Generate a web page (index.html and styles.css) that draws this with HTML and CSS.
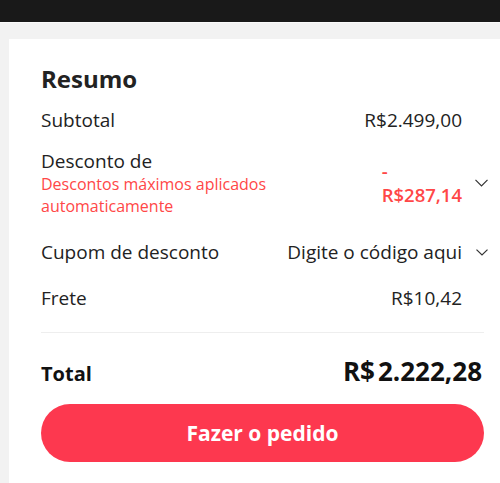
FILE: index.html
```html
<!DOCTYPE html>
<html lang="pt-BR">
<head>
  <meta charset="UTF-8">
  <title>Resumo do pedido</title>
  <link rel="stylesheet" href="styles.css">
</head>
<body>
  <div class="topbar"></div>
  <main class="page">
    <section class="summary">
      <h2 class="summary-title">Resumo</h2>

      <div class="row">
        <span class="label">Subtotal</span>
        <div class="right">
          <span class="value">R$2.499,00</span>
          <span class="icon"></span>
        </div>
      </div>

      <div class="row row-discount">
        <div class="label-block">
          <span class="label">Desconto de</span>
          <span class="hint">Descontos máximos aplicados automaticamente</span>
        </div>
        <div class="right">
          <span class="value value-discount">- R$287,14</span>
          <span class="icon">
            <svg width="13" height="8" viewBox="0 0 13 8"><path d="M0.5 0.8 L6.5 6.8 L12.5 0.8" fill="none" stroke="#333" stroke-width="1.2"/></svg>
          </span>
        </div>
      </div>

      <div class="row row-coupon">
        <span class="label">Cupom de desconto</span>
        <div class="right">
          <span class="value">Digite o código aqui</span>
          <span class="icon">
            <svg width="12" height="7" viewBox="0 0 12 7"><path d="M0.5 0.6 L6 6 L11.5 0.6" fill="none" stroke="#333" stroke-width="1.2"/></svg>
          </span>
        </div>
      </div>

      <div class="row">
        <span class="label">Frete</span>
        <div class="right">
          <span class="value">R$10,42</span>
          <span class="icon"></span>
        </div>
      </div>

      <hr class="divider">

      <div class="total">
        <span class="total-label">Total</span>
        <span class="total-value"><span class="currency">R$</span>2.222,28</span>
      </div>

      <button class="order-btn">Fazer o pedido</button>
    </section>
  </main>
</body>
</html>
```

FILE: styles.css
```css
body {
  margin: 0;
  background: #f2f2f2;
  font-family: 'Open Sans', 'Liberation Sans', sans-serif;
  color: #222;
}
.topbar {
  height: 22px;
  background: #191919;
  border-bottom: 1px solid #fafafa;
}
.page {
  padding: 16px 0 0 9px;
}
.summary {
  background: #fff;
  padding: 24px 16px 40px 32px;
}
.summary-title {
  margin: 0 0 13px;
  font-size: 24px;
  line-height: 32px;
  font-weight: 700;
  color: #222;
}
.row {
  display: flex;
  justify-content: space-between;
  align-items: center;
  font-size: 19px;
  line-height: 24px;
  margin-bottom: 17px;
}
.row-discount {
  padding-bottom: 6px;
}
.row-coupon {
  padding-bottom: 5px;
}
.label-block {
  display: flex;
  flex-direction: column;
  max-width: 240px;
}
.hint {
  color: #ff4747;
  font-size: 16px;
  line-height: 22px;
}
.right {
  display: flex;
  align-items: center;
  margin-right: -4px;
}
.value-discount {
  width: min-content;
  color: #ff4747;
  font-size: 18.5px;
  font-weight: 600;
}
.icon {
  display: flex;
  justify-content: flex-end;
  width: 26px;
}
.icon svg {
  display: block;
}
.divider {
  border: none;
  border-top: 1px solid #eee;
  margin: 22px 0 22px;
}
.total {
  display: flex;
  justify-content: space-between;
  align-items: baseline;
  line-height: 32px;
}
.total-label {
  font-size: 20px;
  font-weight: 700;
  color: #111;
}
.total-value {
  font-size: 26px;
  font-weight: 700;
  color: #111;
  margin-right: 2px;
}
.currency {
  margin-right: 3px;
}
.order-btn {
  display: block;
  width: 100%;
  height: 58px;
  margin-top: 14px;
  border: none;
  border-radius: 29px;
  background: #fd384f;
  color: #fff;
  font-family: inherit;
  font-size: 21px;
  font-weight: 700;
  cursor: pointer;
}
```
